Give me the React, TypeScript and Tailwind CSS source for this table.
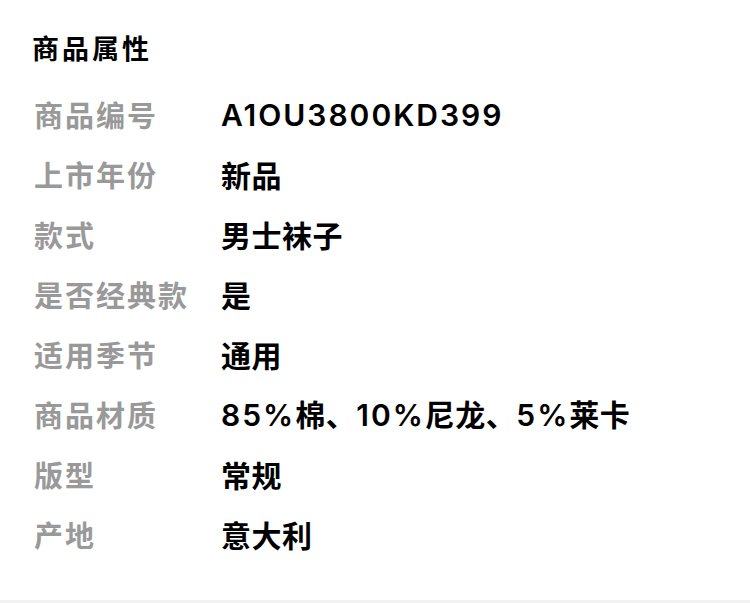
const ROWS: [string, string][] = [
  ['商品编号', 'A1OU3800KD399'],
  ['上市年份', '新品'],
  ['款式', '男士袜子'],
  ['是否经典款', '是'],
  ['适用季节', '通用'],
  ['商品材质', '85%棉、10%尼龙、5%莱卡'],
  ['版型', '常规'],
  ['产地', '意大利'],
];

// latin runs get a slightly larger, wider face than the CJK runs
function Value({ text }: { text: string }) {
  const parts = text.match(/[\x20-\x7e]+|[^\x20-\x7e]+/g) ?? [];
  return (
    <span className="text-[30px] leading-none font-semibold tracking-[0.5px] text-black">
      {parts.map((p, i) =>
        /^[\x20-\x7e]+$/.test(p) ? (
          <span key={i} className="font-['Inter',sans-serif] tracking-[2px]">
            {p}
          </span>
        ) : (
          <span key={i} className="font-bold">
            {p}
          </span>
        ),
      )}
    </span>
  );
}

export default function App() {
  return (
    <div className="flex h-[603px] w-[750px] flex-col bg-white font-['Noto_Sans_CJK_SC',sans-serif]">
      <div className="flex-1 px-[32px]">
        <h2 className="box-content flex h-[71px] items-center pt-[13px] text-[27px] font-bold tracking-[3px] text-black">
          商品属性
        </h2>
        <ul className="flex flex-col">
          {ROWS.map(([label, value]) => (
            <li key={label} className="flex h-[60px] items-center">
              <span className="w-[189px] shrink-0 pl-[2px] text-[29px] leading-none font-bold tracking-[2px] text-[#999]">
                {label}
              </span>
              <Value text={value} />
            </li>
          ))}
        </ul>
      </div>
      <div className="h-[3px] bg-[#f2f2f2]" />
    </div>
  );
}
